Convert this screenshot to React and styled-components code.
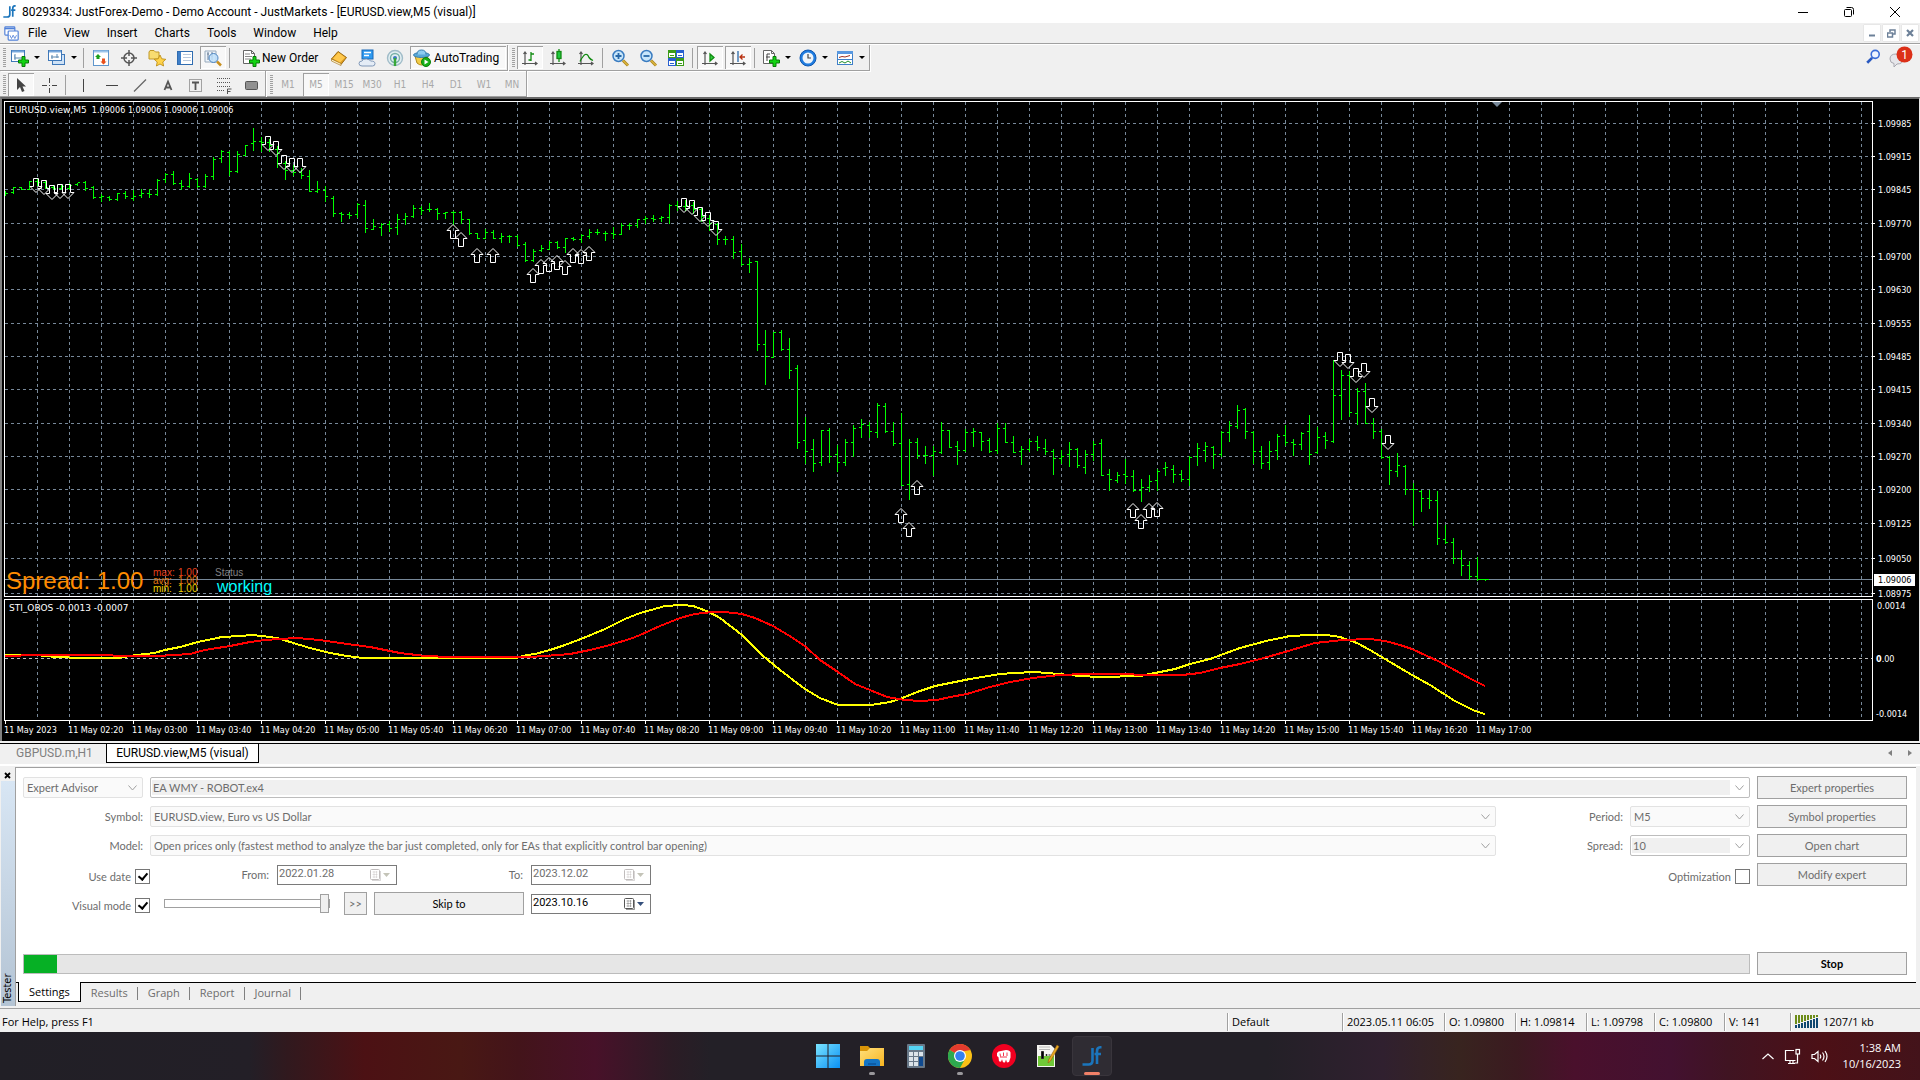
import React from "react";
import styled, { createGlobalStyle, css } from "styled-components";

const ui = `"Open Sans", Roboto, "Liberation Sans", sans-serif`;
const chrome = `Roboto, "Liberation Sans", Arial, sans-serif`;
const dialog = `Lato, "Liberation Sans", Arial, sans-serif`;
const arial = `"Liberation Sans", Arial, sans-serif`;
const small = `"DejaVu Sans Condensed", "DejaVu Sans", sans-serif`;

const Global = createGlobalStyle`
  * { box-sizing: border-box; }
  body { margin: 0; background: #f0f0f0; color: #000; font: 11px/16px ${ui}; }
  button, input, select { font: inherit; color: inherit; margin: 0; }
  ul, nav { margin: 0; padding: 0; list-style: none; }
`;

const Page = styled.div`
  min-height: 100vh;
  display: flex;
  flex-direction: column;
  overflow: hidden;
`;

/* ---------- title and menu ---------- */
const TitleBar = styled.header`
  height: 23px;
  display: flex;
  align-items: center;
  background: #fff;
  padding-left: 3px;
`;
const Title = styled.h1`
  margin: 0 0 0 6px;
  flex: 1;
  font: 12px/16px ${chrome};
`;
const Controls = styled.div`
  display: flex;
  gap: ${(p) => p.$gap || 0}px;
  padding-right: ${(p) => p.$pad || 0}px;
`;
const WinButton = styled.button`
  width: 46px;
  height: 22px;
  padding: 0;
  border: 0;
  background: none;
  display: grid;
  place-items: center;
`;
const ChildButton = styled(WinButton)`
  width: 16px;
  height: 16px;
  background: #fff;
  box-shadow: 0 0 1px #bbb;
`;
const MenuBar = styled.nav`
  height: 22px;
  display: flex;
  align-items: center;
  padding: 0 0 1px 4px;
  border-bottom: 1px solid #fff;
  box-shadow: inset 0 -1px #a0a0a0;
  font: 12px/16px ${chrome};
`;
const MenuList = styled.ul`
  flex: 1;
  display: flex;
  gap: 17px;
  padding-left: 9px;
`;
const MenuItem = styled.button`
  padding: 0;
  border: 0;
  background: none;
`;

/* ---------- toolbars ---------- */
const ToolRow = styled.div`
  display: flex;
  height: 26px;
`;
const Group = styled.div`
  display: flex;
  align-items: center;
  height: 26px;
  padding-top: ${(p) => (p.$low ? 2 : 0)}px;
  border-right: 1px solid #a0a0a0;
  border-bottom: 1px solid #a0a0a0;
  box-shadow: 1px 1px #fff;
  margin-right: 1px;
`;
const Spring = styled.div`
  flex: 1;
`;
const Grip = styled.span`
  width: 3px;
  height: 20px;
  margin: 0 1px 0 3px;
  background: repeating-linear-gradient(#a0a0a0 0 1px, #f0f0f0 1px 2px);
`;
const Sep = styled.span`
  width: 1px;
  height: 20px;
  margin: 0 3px 0 2px;
  background: #a0a0a0;
`;
const pressed = css`
  background: #f8f8f8;
  box-shadow: inset 1px 1px #a0a0a0, inset -1px -1px #fff;
`;
const Tool = styled.button`
  width: ${(p) => p.$w || 26}px;
  height: 23px;
  margin: 0 1px;
  padding: 0 0 0 ${(p) => (p.$w ? p.$pl || 3 : 0)}px;
  border: 0;
  background: none;
  display: flex;
  align-items: center;
  justify-content: ${(p) => (p.$w ? "flex-start" : "center")};
  gap: ${(p) => p.$gap || 3}px;
  white-space: nowrap;
  font: 12px/16px ${chrome};
  ${(p) => p.$on && pressed}
`;
const Period = styled(Tool)`
  color: #a8a8a8;
  font: 10px/16px ${small};
`;
const Caret = styled.span`
  border: 3px solid transparent;
  border-top-color: #000;
  border-bottom: 0;
`;

/* ---------- chart window ---------- */
const ChartWindow = styled.main`
  background: #000;
  border-top: 2px solid #696969;
  border-left: 2px solid #808080;
  border-right: 1px solid #e3e3e3;
  padding: 2px 0 0 2px;
  color: #fff;
  font: 9px/12px ${small};
`;
const PlotRow = styled.section`
  display: grid;
  grid-template-columns: minmax(0, 1fr) 46px;
  margin-bottom: ${(p) => p.$gap || 0}px;
`;
const Plot = styled.div`
  position: relative;
  border: 1px solid #fff;
  height: ${(p) => p.$h}px;
  overflow: hidden;
`;
const Drawing = styled.svg`
  display: block;
  width: 100%;
  height: 100%;
`;
const Scale = styled.svg`
  display: block;
  width: 46px;
  height: ${(p) => p.$h}px;
  overflow: visible;
  fill: #fff;
`;
const PlotTitle = styled.div`
  position: absolute;
  left: 4px;
  top: 2px;
  white-space: pre;
  span { font-family: "DejaVu Sans", sans-serif; }
`;
const Readout = styled.div`
  position: absolute;
  left: 1px;
  bottom: 0;
  display: flex;
  align-items: center;
  font-family: ${arial};
`;
const Spread = styled.div`
  color: #ff8c00;
  font-size: 24px;
  line-height: 30px;
  width: 147px;
`;
const Extremes = styled.dl`
  margin: 0;
  width: 62px;
  display: grid;
  grid-template-columns: 25px 20px;
  font-size: 10px;
  line-height: 8px;
`;
const Extreme = styled.div`
  display: contents;
  color: ${(p) => p.$c};
  dd { margin: 0; }
`;
const Status = styled.div`
  color: #808080;
  font-size: 10px;
  line-height: 10px;
  padding-top: 2px;
  strong {
    display: block;
    padding-left: 2px;
    font-weight: 400;
    font-size: 16px;
    line-height: 18px;
    color: #00ffff;
  }
`;
const TimeAxis = styled.ul`
  display: flex;
  height: 20px;
  overflow: hidden;
`;
const TimeLabel = styled.li`
  flex: 0 0 64px;
  white-space: nowrap;
  &::before {
    content: "";
    display: block;
    width: 1px;
    height: 3px;
    margin-left: 1px;
    background: #fff;
  }
`;

/* quotes: [high, low, open, close], three units to a pixel */
const lower = (by, list) => list.map((q) => q.map((v) => v + by));
const quotes = [
  ...lower(0, [
    [303,315,315,310],[291,311,308,293],[292,299,292,298],[273,299,298,275],[268,285,275,278],[275,295,278,293],
    [287,297,292,295],[283,297,295,290],[280,298,296,285],[280,285,284,277],[275,300,277,294],[290,326,293,322],
    [314,333,322,320],[318,331,321,328],[309,332,328,311],[304,326,311,319],[300,330,324,319],[299,322,317,310],
    [299,323,309,313],[267,316,314,272],[250,276,269,254],[243,284,254,280],[272,298,279,290],[249,293,290,266],
    [265,292,267,290],[252,293,290,259],[201,267,260,207],[180,216,206,184],[184,256,187,244],[184,248,245,193],
    [165,197,195,167],[114,180,160,154],[141,184,154,156],[147,185,157,165],[170,231,178,190],[215,267,221,240],
    [225,255,240,248],[235,264,246,257],[240,305,260,304],[273,307,303,298],[289,333,301,320],[320,380,325,370],
    [367,394,370,374],[366,386,373,377],[340,383,374,343],[331,426,346,415],[388,419,418,409],[401,435,412,403],
    [394,423,404,416],[372,434,412,387],[371,403,388,379],[345,381,380,355],[350,372,354,361],[339,363,358,358],
    [354,389,358,371],[366,386,370,368],[364,404,367,367],[363,399,367,388],[388,432,388,430],[430,445,430,445],
    [417,446,445,427],[420,446,427,445],[429,456,445,438],[435,456,440,439],[436,468,439,466],[456,513,463,511],
    [477,513,511,484],[465,483,481,475],[454,479,478,457],[454,474,457,472],[444,486,472,445],[442,452,446,448],
    [434,456,448,437],[417,444,440,428],[417,432,428,428],[424,450,430,430],[412,444,431,433],[399,434,433,406],
    [400,419,406,405],[387,412,406,388],
  ]),
  ...lower(270, [
    [109,129,118,116],[105,125,116,117],[108,125,114,112],[72,129,112,75],[63,90,76,80],[62,92,80,77],
    [66,100,77,88],[82,125,88,108],[105,150,115,130],[131,192,133,178],[170,194,178,178],[168,234,178,216],
    [192,256,214,253],[235,276,253,247],[243,510,244,493],[450,612,493,529],[456,533,532,457],[450,510,457,508],
    [474,594,508,571],[555,806,566,787],[711,851,781,813],[777,873,807,850],[751,857,848,751],[744,846,751,828],
    [795,875,823,847],[777,855,847,787],[736,829,787,745],[717,771,742,733],[727,773,736,754],[669,771,757,676],
    [670,758,679,754],[727,795,754,790],[699,917,790,916],[777,957,913,787],[774,836,787,826],[798,849,826,826],
    [798,886,825,814],[727,819,817,751],[751,803,751,802],[783,852,799,811],[747,813,811,757],[744,798,757,754],
    [757,810,757,784],[774,818,781,814],[729,819,811,745],[729,788,745,787],[768,818,787,817],[799,852,814,808],
    [777,815,808,784],[768,810,784,802],[778,822,805,814],[807,882,814,835],[810,851,835,829],[786,858,823,808],
    [805,861,808,856],[810,879,862,823],[783,840,823,793],[777,887,790,886],[868,930,883,898],[877,907,901,886],
    [837,909,883,889],[870,933,889,931],[897,963,931,922],[885,933,922,904],[867,930,901,874],[846,885,865,862],
    [855,906,868,883],[870,903,883,898],[828,915,898,832],[789,855,829,805],[786,843,811,799],[798,864,802,823],
    [753,829,823,757],[724,783,757,736],[675,744,739,691],[684,774,688,754],
  ]),
  ...lower(720, [
    [303,401,307,364],[348,414,364,400],[333,417,397,364],[312,387,361,318],[285,347,316,337],[327,375,337,343],
    [306,357,343,309],[255,402,304,373],[291,369,367,322],[306,354,319,331],[90,336,334,196],[120,267,196,136],
    [123,258,136,247],[174,282,250,184],[159,281,184,280],[264,324,280,304],[297,384,304,382],[379,462,382,421],
    [369,438,424,406],[405,492,409,478],[459,585,478,478],[480,543,484,505],[480,534,505,511],[483,642,511,625],
    [585,639,628,637],[624,699,637,685],[660,735,685,706],[693,748,706,739],[682,750,739,748],[747,750,748,748],
  ]),
];
const barPath = quotes
  .map(([h, l, o, c], i) => {
    const y = (v) => Math.floor(v / 3) - 12;
    const x = i * 8;
    return `M${x} ${y(h)}h1V${y(l) + 1}h-1zM${x - 2} ${y(o)}h2v1h-2zM${x + 1} ${y(c)}h2v1h-2z`;
  })
  .join("");

const sells = [[36,178],[44,180],[52,185],[60,184],[68,184],[268,136],[276,141],[284,155],[292,158],[300,158],[684,198],[692,200],[700,207],[708,212],[716,221],[1340,352],[1348,354],[1356,368],[1364,363],[1372,398],[1388,435]];
const buys = [[453,224],[461,232],[477,248],[493,248],[533,268],[541,259],[549,257],[557,255],[565,260],[573,248],[581,249],[589,246],[917,480],[901,508],[909,522],[1133,503],[1141,514],[1149,503],[1157,502]];

const levels = [
  [123, "1.09985"],[156, "1.09915"],[189, "1.09845"],[223, "1.09770"],[256, "1.09700"],[289, "1.09630"],[323, "1.09555"],
  [356, "1.09485"],[389, "1.09415"],[423, "1.09340"],[456, "1.09270"],[489, "1.09200"],[523, "1.09125"],[558, "1.09050"],[593, "1.08975"],
];

const fast = [[5,655],[37,655],[45,656],[57,657],[80,658],[118,658],[130,656],[137,655],[154,653],[165,650],[180,647],[198,642],[222,637],[240,636],[252,635],[262,636],[277,638],[290,642],[310,648],[330,653],[347,656],[363,658],[429,658],[516,658],[527,655],[535,654],[550,650],[565,645],[581,639],[605,629],[625,619],[640,613],[651,610],[665,606],[682,605],[693,606],[709,612],[720,618],[742,635],[762,655],[780,670],[805,689],[820,698],[838,705],[871,705],[890,702],[900,699],[917,692],[935,686],[950,683],[970,679],[1000,674],[1015,673],[1033,672],[1048,673],[1080,676],[1100,677],[1140,676],[1155,673],[1175,669],[1190,664],[1210,659],[1240,648],[1266,641],[1290,636],[1310,635],[1327,635],[1340,637],[1357,643],[1370,650],[1385,659],[1412,675],[1430,685],[1455,701],[1475,711],[1485,714]];
const slow = [[5,656],[37,655],[90,655],[135,656],[158,656],[190,654],[205,650],[230,646],[250,642],[265,640],[280,639],[297,638],[320,640],[340,643],[370,647],[400,653],[425,656],[450,657],[530,657],[545,656],[570,654],[590,650],[610,645],[630,639],[640,635],[660,626],[680,618],[695,614],[712,612],[725,612],[742,614],[755,618],[773,626],[793,638],[806,647],[820,660],[838,672],[855,684],[870,690],[887,697],[905,700],[920,701],[937,700],[950,697],[967,694],[990,687],[1010,682],[1033,678],[1060,675],[1085,674],[1118,674],[1150,675],[1182,675],[1200,673],[1220,668],[1240,664],[1260,659],[1285,652],[1315,643],[1343,640],[1370,639],[1385,641],[1400,645],[1412,649],[1440,662],[1460,673],[1473,680],[1485,686]];
const line = (pts) => pts.map(([x, y]) => `${x - 5},${y - 600}`).join(" ");

const times = Array.from({ length: 24 }, (_, i) => {
  if (i === 0) return "11 May 2023";
  const m = 100 + i * 40;
  return `11 May ${String(Math.floor(m / 60)).padStart(2, "0")}:${String(m % 60).padStart(2, "0")}`;
});

const gridX = Array.from({ length: 120 }, (_, i) => 32 + i * 32);
const VerticalGrid = ({ h }) => (
  <path d={gridX.map((x) => `M${x + 0.5} 0V${h}`).join("")} stroke="#778899" strokeDasharray="3 3" shapeRendering="crispEdges" />
);

const PriceChart = () => (
  <PlotRow $gap={2}>
    <Plot $h={496}>
      <Drawing aria-label="EURUSD price bars">
        <VerticalGrid h={494} />
        <path d={levels.map(([y]) => `M0 ${y - 101.5}H4000`).join("")} stroke="#778899" strokeDasharray="3 3" shapeRendering="crispEdges" />
        <path d="M0 477.5H4000" stroke="#778899" shapeRendering="crispEdges" />
        <path d={barPath} fill="#00ff00" shapeRendering="crispEdges" />
        <path d="M1473 477h11v1h-11z" fill="#00ff00" shapeRendering="crispEdges" />
        <path d="M1487 0h10l-5 5z" fill="#778899" />
        <g fill="none" stroke="#fff">
          {sells.map(([x, y]) => (
            <path key={x} d={`M${x - 7.5} ${y - 101.5}h5v8h3.500l-6 6l-6 -6h3.500z`} />
          ))}
          {buys.map(([x, y]) => (
            <path key={x} d={`M${x - 7.5} ${y - 87.5}h5v-8h3.500l-6 -6l-6 6h3.500z`} />
          ))}
        </g>
      </Drawing>
      <PlotTitle><span>EURUSD.view,M5</span>{"  1.09006 1.09006 1.09006 1.09006"}</PlotTitle>
      <Readout>
        <Spread>Spread: 1.00</Spread>
        <Extremes>
          <Extreme $c="#e8401c"><dt>max:</dt><dd>1.00</dd></Extreme>
          <Extreme $c="#e07810"><dt>avg:</dt><dd>1.00</dd></Extreme>
          <Extreme $c="#f0d000"><dt>min:</dt><dd>1.00</dd></Extreme>
        </Extremes>
        <Status>Status<strong>working</strong></Status>
      </Readout>
    </Plot>
    <Scale $h={496} aria-label="Price scale">
      {levels.map(([y, label]) => (
        <React.Fragment key={label}>
          <rect x="0" y={y - 101} width="2" height="1" />
          <text x="5" y={y - 97}>{label}</text>
        </React.Fragment>
      ))}
      <rect x="1" y="473" width="41" height="12" />
      <text x="5" y="482" fill="#000">1.09006</text>
    </Scale>
  </PlotRow>
);

const Indicator = () => (
  <PlotRow>
    <Plot $h={122}>
      <Drawing aria-label="STI_OBOS indicator">
        <VerticalGrid h={120} />
        <path d="M0 58.500H4000" stroke="#c0c0c0" strokeDasharray="3 3" shapeRendering="crispEdges" />
        <g fill="none" strokeWidth="2" shapeRendering="crispEdges">
          <polyline points={line(fast)} stroke="#ffff00" />
          <polyline points={line(slow)} stroke="#ff0000" />
        </g>
      </Drawing>
      <PlotTitle><span>STI_OBOS -0.0013 -0.0007</span></PlotTitle>
    </Plot>
    <Scale $h={122} aria-label="Indicator scale">
      <text x="4" y="10">0.0014</text>
      <text x="3" y="63"><tspan fontWeight="700">0</tspan>.00</text>
      <text x="3" y="118">-0.0014</text>
    </Scale>
  </PlotRow>
);

/* ---------- chart tabs ---------- */
const ChartTabs = styled.nav`
  display: flex;
  align-items: flex-start;
  height: 23px;
  margin-top: 2px;
  border-top: 1px solid #000;
  border-bottom: 2px solid #fff;
  padding-left: 3px;
`;
const ChartTab = styled.button`
  height: 19px;
  width: ${(p) => p.$w}px;
  padding: 0;
  font: 12px/16px ${chrome};
  border: 1px solid transparent;
  border-top: 0;
  background: ${(p) => (p.$on ? "#fff" : "none")};
  border-color: ${(p) => (p.$on ? "#000" : "transparent")};
  color: ${(p) => (p.$on ? "#000" : "#808080")};
`;
const Scroll = styled.button`
  width: 20px;
  height: 16px;
  padding: 0;
  border: 0;
  background: none;
`;

/* ---------- tester ---------- */
const Tester = styled.section`
  display: grid;
  grid-template-columns: 15px minmax(0, 1fr);
  margin: 0 4px 0 0;
  padding-top: 1px;
`;
const Side = styled.div`
  display: flex;
  flex-direction: column;
  align-items: center;
`;
const SideClose = styled.button`
  width: 12px;
  height: 14px;
  padding: 0;
  border: 0;
  background: none;
`;
const SideTitle = styled.h2`
  flex: 1;
  width: 14px;
  margin: 0;
  padding: 3px 0 0;
  background: linear-gradient(#b4c4d4, #d8e6f4);
  writing-mode: vertical-rl;
  rotate: 180deg;
  font: 11px/14px ${small};
`;
const TesterBody = styled.div`
  border-left: 1px solid #a0a0a0;
  border-top: 1px solid #a0a0a0;
  background: #fff;
`;
const Form = styled.form`
  display: grid;
  grid-template-columns: 120px minmax(0, 1fr) 120px 120px 150px;
  grid-auto-rows: 23px;
  gap: 6px 7px;
  padding: 8px 9px 0 7px;
  color: #6d6d6d;
  font: 11px/14px ${dialog};
  align-items: center;
`;
const Label = styled.label`
  text-align: right;
  color: #6d6d6d;
`;
const Cell = styled.div`
  grid-column: ${(p) => p.$col};
  min-width: 0;
  display: flex;
  align-items: center;
  justify-content: ${(p) => (p.$end ? "flex-end" : "flex-start")};
`;
const SelectBox = styled.div`
  grid-column: ${(p) => p.$col};
  position: relative;
  height: 21px;
  border: 1px solid ${(p) => (p.$edit ? "#bdbdbd" : "#e2e2e2")};
  border-radius: 2px;
  background: ${(p) => (p.$edit ? "#fff" : "#fafafa")};
  padding: ${(p) => (p.$edit ? "2px 19px 2px 1px" : "0")};
  svg { position: absolute; right: 5px; top: 7px; }
`;
const Select = styled.select`
  appearance: none;
  display: block;
  width: 100%;
  height: 100%;
  border: 0;
  padding: 0 ${(p) => (p.$edit ? 1 : 3)}px;
  opacity: 1;
  color: #6d6d6d;
  background: ${(p) => (p.$edit ? "#f0f0f0" : "transparent")};
`;
const PushButton = styled.button`
  height: 23px;
  width: ${(p) => (p.$w ? `${p.$w}px` : "100%")};
  padding: 0;
  margin-right: ${(p) => p.$mr || 0}px;
  border: 1px solid #a0a0a0;
  background: #f0f0f0;
  color: ${(p) => (p.$ready ? "#000" : "#6d6d6d")};
  font-weight: ${(p) => (p.$bold ? 700 : 400)};
`;
const Check = styled.input`
  appearance: none;
  flex: none;
  width: 15px;
  height: 15px;
  margin: 0 0 0 4px;
  border: 1px solid #767676;
  background: #fff;
  display: grid;
  place-items: center;
  color: #000;
  &:checked::after {
    content: "";
    width: 4px;
    height: 7px;
    margin-top: -2px;
    border: solid #000;
    border-width: 0 2px 2px 0;
    rotate: 40deg;
  }
`;
const CheckLabel = styled(Cell)`
  padding-top: 4px;
  margin-right: ${(p) => (p.$hang ? -7 : 0)}px;
`;
const DateBox = styled.div`
  width: 120px;
  height: 20px;
  display: flex;
  align-items: center;
  border: 1px solid #7a7a7a;
  background: #fff;
  color: ${(p) => (p.$live ? "#000" : "#6d6d6d")};
  padding-right: 5px;
`;
const DateInput = styled.input`
  flex: 1;
  min-width: 0;
  height: 18px;
  padding: 0 0 2px 1px;
  border: 0;
  background: none;
  font-family: ${chrome};
`;
const FieldLabel = styled(Label)`
  width: ${(p) => p.$w}px;
  padding-right: 8px;
`;
const Range = styled.input`
  appearance: none;
  width: 166px;
  height: 20px;
  margin: 0 14px;
  background: none;
  &::-webkit-slider-runnable-track {
    height: 9px;
    border: 1px solid #a0a0a0;
    background: #fff;
  }
  &::-webkit-slider-thumb {
    appearance: none;
    width: 9px;
    height: 19px;
    margin-top: -6px;
    border: 1px solid #a0a0a0;
    background: #f0f0f0;
  }
`;
const RunRow = styled.div`
  display: grid;
  grid-template-columns: minmax(0, 1fr) 150px;
  gap: 7px;
  align-items: center;
  padding: 37px 9px 7px 7px;
  font: 11px/14px ${dialog};
`;
const Progress = styled.progress`
  appearance: none;
  display: block;
  width: 100%;
  height: 20px;
  border: 1px solid #bcbcbc;
  &::-webkit-progress-bar { background: #e6e6e6; }
  &::-webkit-progress-value { background: #06b025; }
`;
const TesterTabs = styled.nav`
  display: flex;
  height: 24px;
  border-top: 1px solid #000;
  background: #f0f0f0;
  padding-left: 2px;
`;
const TesterTab = styled.button`
  height: 19px;
  padding: 0 10px;
  border: 0;
  color: #6d6d6d;
  background: linear-gradient(#808080, #808080) right 4px / 1px 13px no-repeat;
  ${(p) => p.$on && css`
    color: #000;
    background: #fff;
    border: solid #000;
    border-width: 0 1px 1px;
    margin-top: -1px;
    height: 20px;
  `}
`;

/* ---------- status bar ---------- */
const StatusBar = styled.footer`
  height: 24px;
  display: flex;
  align-items: center;
  border-top: 1px solid #a0a0a0;
  padding: 2px 0 0 2px;
`;
const Help = styled.span`
  flex: 1;
`;
const StatusCell = styled.span`
  width: ${(p) => p.$w}px;
  height: 18px;
  line-height: 18px;
  display: flex;
  align-items: center;
  gap: 4px;
  border-left: 1px solid #a0a0a0;
  box-shadow: inset 1px 0 #fff;
  padding-left: 4px;
  white-space: nowrap;
`;

/* ---------- taskbar ---------- */
const Taskbar = styled.nav`
  height: 48px;
  display: grid;
  grid-template-columns: 1fr auto 1fr;
  align-items: center;
  color: #fff;
  background: linear-gradient(90deg, #211f26 0%, #231f27 13%, #31191e 15%, #4c1114 19%, #491814 24%, #43141a 27%, #481129 31%, #2b1c25 35%, #232027 37%, #232027 66%, #30202f 72%, #38241f 76%, #3b1a20 79%, #4a102c 82%, #431130 87%, #401422 90%, #4c1016 95%, #43131a 100%);
`;
const Apps = styled.div`
  grid-column: 2;
  display: flex;
  gap: 4px;
`;
const AppButton = styled.button`
  position: relative;
  width: 40px;
  height: 40px;
  padding: 0;
  border: 1px solid ${(p) => (p.$active ? "#39353c" : "transparent")};
  border-radius: 4px;
  background: ${(p) => (p.$active ? "#2f2c33" : "none")};
  display: grid;
  place-items: center;
  ${(p) => p.$mark && css`
    &::after {
      content: "";
      position: absolute;
      left: calc(50% - ${p.$mark / 2}px);
      bottom: 0;
      width: ${p.$mark}px;
      height: 3px;
      border-radius: 2px;
      background: ${p.$active ? "#f08068" : "#9a989c"};
    }
  `}
`;
const Tray = styled.div`
  display: flex;
  align-items: center;
  justify-content: flex-end;
  gap: 10px;
  padding-right: 19px;
`;
const Clock = styled.time`
  text-align: right;
  margin-left: 5px;
`;

/* ---------- icons ---------- */
const Glyph = styled.svg`
  flex: none;
`;
const Icon = ({ s = 18, children, ...rest }) => (
  <Glyph width={s} height={s} viewBox="0 0 18 18" fill="none" aria-hidden="true" {...rest}>{children}</Glyph>
);
const Plus = ({ x = 7, y = 7 }) => (
  <path transform={`translate(${x} ${y})`} d="M4 .5h3v3.500h3.500v3H7V10.500H4V7H.5V4H4z" fill="#12d412" stroke="#087a08" />
);
const JF = ({ s = 13 }) => (
  <svg width={s} height={s} viewBox="0 0 20 20" fill="none" stroke="#1b75bc" strokeWidth="2.600" aria-hidden="true">
    <path d="M10.500 2v12.500q0 4-4 4H.5M19.500 1.300h-1.500q-3 0-3 4V18M12.500 8H19" />
  </svg>
);
const ChartPlus = () => (
  <Icon><rect x=".5" y="1.500" width="13" height="11" fill="#fff" stroke="#3f78b8" /><path d="M1 2.500h12" stroke="#78a8dc" strokeWidth="2" /><path d="M4 5v6M3 9h8M4 7h-1" stroke="#5a88b0" /><Plus /></Icon>
);
const Profiles = () => (
  <Icon><rect x="4.500" y="5.500" width="12" height="10" fill="#cfe2f6" stroke="#3f78b8" /><rect x=".5" y="1.500" width="13" height="10" fill="#fff" stroke="#3f78b8" /><path d="M1 2.500h12" stroke="#78a8dc" strokeWidth="2" /><path d="M3 8h8M4 6v4M9 5v4" stroke="#5a88b0" /></Icon>
);
const Market = () => (
  <Icon><rect x="1.500" y="1.500" width="15" height="15" fill="#fff" stroke="#5f96cc" /><path d="M2 2.500h14" stroke="#9cc4ea" strokeWidth="2" /><path d="M6 5l3 3H7.500v2h-3V8H3z" fill="#1aa01a" /><path d="M11.500 15.500l-3-3H10v-3h3v3h1.500z" fill="#e8501c" /></Icon>
);
const Cross = () => (
  <Icon stroke="#555" strokeWidth="1.500"><circle cx="9" cy="9" r="5" /><path d="M9 1v6M9 11v6M1 9h6M11 9h6" /></Icon>
);
const Star = () => (
  <Icon><path d="M1 3l1-1.500h4L7.500 3H11v7H1z" fill="#f8dc70" stroke="#c09828" /><path d="M12 6l1.800 3.800 4 .5-3 2.700.8 4-3.600-2-3.600 2 .8-4-3-2.700 4-.5z" fill="#ffd34a" stroke="#b8860b" strokeWidth=".8" /></Icon>
);
const Book = () => (
  <Icon><rect x="1.500" y="2.500" width="15" height="13" fill="#fff" stroke="#2f6cb0" /><path d="M2 3h3v12H2z" fill="#3f7fc8" /><path d="M7 5.500h8M7 8.500h8M7 11.500h8" stroke="#b8c8dc" /></Icon>
);
const TesterIcon = () => (
  <Icon><path d="M1 2h11v11H1z" fill="#eef4fa" stroke="#98aabc" /><path d="M4 3v8M8 3v8M3 5h2M7 7h2" stroke="#6c8098" /><circle cx="9.500" cy="9" r="4.500" fill="#bfe0fa" fillOpacity=".85" stroke="#4c84c0" /><path d="M13 12.500l4 4" stroke="#c89020" strokeWidth="2.500" /></Icon>
);
const Sheet = ({ f }) => (
  <Icon><path d="M1.500 1.500h8l3 3v10h-11z" fill="#fff" stroke="#666" /><path d="M9.500 1.500v3h3" stroke="#666" />{f ? <path d="M5 12V5h3M4 8h4" stroke="#444" /> : <path d="M3 5h5M3 7.500h7M3 10h6" stroke="#888" />}<Plus /></Icon>
);
const Gold = () => (
  <Icon><path d="M1.500 10L8 2.500l8.500 6-5.500 7z" fill="#e0a024" stroke="#9c6a10" /><path d="M3 9.500L8.500 3.500l6.500 5-5 5z" fill="#ffc94e" /><path d="M1.500 10v2l9.500 4.500v-2z" fill="#fff2c8" stroke="#9c6a10" strokeWidth=".6" /></Icon>
);
const Vps = () => (
  <Icon><rect x="4" y="1" width="11" height="9" fill="#2f9af0" stroke="#1868b8" /><path d="M6 3.500h7M6 6.500h5" stroke="#fff" strokeWidth="1.500" /><path d="M4 17q-3 0-3-2.500T4 12q1-2.500 4.500-2t4 2Q17 12 17 14.500T14.500 17z" fill="#e4ecf6" stroke="#8098b8" /></Icon>
);
const Signal = () => (
  <Icon><circle cx="9" cy="9" r="7.500" fill="#e2eef2" stroke="#a0bcc8" strokeWidth="1.400" /><circle cx="9" cy="9" r="4.500" stroke="#78b0a8" strokeWidth="1.400" /><circle cx="9" cy="9" r="2" fill="#3878c0" /><path d="M9 9v8" stroke="#38a838" strokeWidth="2.400" /></Icon>
);
const Auto = () => (
  <Icon><path d="M2 7h13l-2 7q-4.500 4-9 0z" fill="#f2cc48" stroke="#b08a18" /><ellipse cx="8.500" cy="6" rx="8" ry="2.500" fill="#58a8d8" stroke="#3880b0" /><path d="M4 5.500q0-4.500 4.500-4.500T13 5.500" fill="#8cccf0" stroke="#3880b0" /><circle cx="13" cy="13" r="4.500" fill="#18b018" stroke="#0c800c" /><path d="M11.500 10.500v5l4-2.500z" fill="#fff" /></Icon>
);
const Axis = ({ children, c = "#108a10" }) => (
  <Icon><path d="M4 3v13M1 14.500h14M2.500 5L4 3l1.500 2M14 13l2 1.500-2 1.500" stroke="#555" strokeWidth="1.200" /><g stroke={c} strokeWidth="1.300">{children}</g></Icon>
);
const Lens = ({ plus }) => (
  <Icon><circle cx="7.500" cy="7" r="5.500" fill="#c8e6fa" stroke="#3a7cc0" strokeWidth="1.500" /><path d={plus ? "M4.500 7h6M7.500 4v6" : "M4.500 7h6"} stroke="#2868a8" strokeWidth="1.800" /><path d="M12 11.500l5 5" stroke="#b08820" strokeWidth="3" /><path d="M12 11.500l5 5" stroke="#f8d850" /></Icon>
);
const Tiles = () => (
  <Icon>{[[1, 1, "#3c9c18"], [9, 1, "#2860d0"], [1, 9, "#2860d0"], [9, 9, "#3c9c18"]].map(([x, y, c]) => (
    <g key={`${x}${y}`}><rect x={x} y={y} width="8" height="8" fill={c} /><path d={`M${x + 1} ${y + 3}h6v4h-6z`} fill="#fff" /><path d={`M${x + 2} ${y + 5.5}h4`} stroke={c} /></g>
  ))}</Icon>
);
const ClockIcon = () => (
  <Icon><circle cx="9" cy="9" r="8" fill="#1f7ce0" stroke="#1058b0" /><circle cx="9" cy="9" r="5.500" fill="#eef4fa" /><path d="M9 5v4h3" stroke="#444" strokeWidth="1.200" /></Icon>
);
const Template = () => (
  <Icon><rect x="1.500" y="2.500" width="15" height="13" fill="#fff" stroke="#3f7fc8" /><path d="M1 3.500h16" stroke="#5898e0" strokeWidth="3" /><path d="M3 8.500l3-1 3 .5 5-1.500" stroke="#a03020" /><path d="M2 10.500h14" stroke="#3f7fc8" /><path d="M3 14l3-1.500 3 1.500 3-2 3 2" stroke="#20902c" /></Icon>
);
const Chevron = () => (
  <svg width="9" height="6" viewBox="0 0 9 6" fill="none" stroke="#a0a0a0" aria-hidden="true"><path d="M.5.5l4 4.500 4-4.500" /></svg>
);
const Calendar = ({ c, t }) => (
  <svg width="21" height="12" viewBox="0 0 21 12" fill="none" aria-hidden="true">
    <rect x=".5" y=".5" width="9" height="10" rx="1" fill="#fff" stroke={c} /><path d="M2.500 3h5M2.500 5.500h5M2.500 8h5M4 2v7M6.500 2v7" stroke={c} strokeOpacity=".4" /><path d="M10.500 2v9.500H2" stroke={c} strokeOpacity=".6" /><path d="M13 4h7l-3.500 4z" fill={t} />
  </svg>
);

const DropTool = ({ label, children }) => (
  <Tool $w={35} $gap={5} aria-label={label}>{children}<Caret /></Tool>
);

const Toolbars = () => (
  <div>
    <ToolRow>
      <Group>
        <Grip />
        <DropTool label="New chart"><ChartPlus /></DropTool>
        <DropTool label="Profiles"><Profiles /></DropTool>
        <Sep />
        <Tool aria-label="Market Watch"><Market /></Tool>
        <Tool aria-label="Data Window"><Cross /></Tool>
        <Tool aria-label="Navigator"><Star /></Tool>
        <Tool aria-label="Terminal"><Book /></Tool>
        <Tool $on aria-label="Strategy Tester"><TesterIcon /></Tool>
        <Sep />
        <Tool $w={90} $gap={2} $pl={8}><Sheet />New Order</Tool>
        <Tool aria-label="MetaEditor"><Gold /></Tool>
        <Tool aria-label="VPS"><Vps /></Tool>
        <Tool aria-label="Signals"><Signal /></Tool>
        <Tool $w={96} $on><Auto />AutoTrading</Tool>
      </Group>
      <Group>
        <Grip />
        <Tool $on aria-label="Bar chart"><Axis><path d="M10 3v9M10 5h3M7.500 11H10" /></Axis></Tool>
        <Tool aria-label="Candlesticks"><Axis><path d="M10 0v13" /><rect x="8" y="2.500" width="4" height="7" fill="#20c840" /></Axis></Tool>
        <Tool aria-label="Line chart"><Axis><path d="M3 12.500q6-12 9-4 1.500 2 4 3" /></Axis></Tool>
        <Sep />
        <Tool aria-label="Zoom in"><Lens plus /></Tool>
        <Tool aria-label="Zoom out"><Lens /></Tool>
        <Tool aria-label="Tile windows"><Tiles /></Tool>
        <Sep />
        <Tool $on aria-label="Auto scroll"><Axis><path d="M9 5v7l4-3.500z" fill="#30d040" /></Axis></Tool>
        <Tool $on aria-label="Chart shift"><Axis c="#b83010"><path d="M9 2v11" stroke="#2868a8" /><path d="M16 8h-5M13.500 5.500L11 8l2.500 2.500" /></Axis></Tool>
        <Sep />
        <DropTool label="Indicators"><Sheet f /></DropTool>
        <DropTool label="Periods"><ClockIcon /></DropTool>
        <DropTool label="Templates"><Template /></DropTool>
      </Group>
      <Spring />
      <Controls $pad={5}>
        <Tool aria-label="Search"><Icon s={16}><circle cx="11.500" cy="6" r="4.500" fill="#eef4ff" stroke="#3a6cd8" strokeWidth="1.800" /><path d="M8 10l-5.500 5.500" stroke="#2858c0" strokeWidth="3" /></Icon></Tool>
        <Tool aria-label="Notifications">
          <svg width="24" height="21" viewBox="0 0 24 21">
            <path d="M1 13q0-5 6-5t7 5q0 5-6 5l-3 3v-3.500Q1 17 1 13z" fill="#e6e6ea" stroke="#a8a8b0" />
            <circle cx="15.500" cy="8.500" r="8" fill="#dc3018" />
            <text x="15.500" y="13" textAnchor="middle" fill="#fff" fontSize="12">1</text>
          </svg>
        </Tool>
      </Controls>
    </ToolRow>
    <ToolRow>
      <Group $low>
        <Grip />
        <Tool $on aria-label="Cursor"><Icon><path d="M5 2v12l3-3 2 5 2.500-1-2-4.500H14z" fill="#444" /></Icon></Tool>
        <Tool aria-label="Crosshair"><Icon stroke="#444"><path d="M9.500 2v5M9.500 12v5M2 9.500h5M12 9.500h5M9 9.500h1" /></Icon></Tool>
        <Sep />
        <Tool aria-label="Vertical line"><Icon stroke="#444"><path d="M9.500 3v13" /></Icon></Tool>
        <Tool aria-label="Horizontal line"><Icon stroke="#444"><path d="M4 9.500h12" /></Icon></Tool>
        <Tool aria-label="Trendline"><Icon stroke="#666" strokeWidth="1.300"><path d="M4 15.500L16 3.500" /></Icon></Tool>
        <Tool aria-label="Text"><Icon stroke="#555" strokeWidth="1.800"><path d="M6.500 14L10 5.500l3.500 8.500M7.500 11.500h5" /></Icon></Tool>
        <Tool aria-label="Text label"><Icon stroke="#555"><rect x="3.500" y="3.500" width="12" height="12" strokeDasharray="1 1" /><path d="M6 6.500h7M9.500 6v8" strokeWidth="1.800" /></Icon></Tool>
        <Tool aria-label="Fibonacci"><Icon stroke="#555"><path d="M3 2.500h14M3 6.500h14M3 10.500h14M3 14.500h8" strokeDasharray="1 1" /><path d="M13.500 18v-5h4M13.500 15.500h3" /></Icon></Tool>
        <Tool aria-label="Rectangle"><Icon><rect x="3.500" y="5.500" width="12" height="8" rx="1" fill="#909090" stroke="#555" /></Icon></Tool>
      </Group>
      <Group $low>
        <Grip />
        {["M1", "M5", "M15", "M30", "H1", "H4", "D1", "W1", "MN"].map((p) => (
          <Period key={p} $on={p === "M5"}>{p}</Period>
        ))}
      </Group>
    </ToolRow>
  </div>
);

const Choice = ({ id, col, edit, children }) => (
  <SelectBox $col={col} $edit={edit}>
    <Select id={id} $edit={edit} disabled aria-label={id}><option>{children}</option></Select>
    <Chevron />
  </SelectBox>
);

const DateField = ({ id, value, live }) => (
  <DateBox $live={live}>
    <DateInput id={id} defaultValue={value} disabled={!live} aria-label={id} />
    <Calendar c={live ? "#555" : "#c0bcbc"} t={live ? "#35507c" : "#c4c4b8"} />
  </DateBox>
);

const TesterPanel = () => (
  <Tester>
    <Side>
      <SideClose aria-label="Close tester"><svg width="7" height="7" viewBox="0 0 7 7" stroke="#000" strokeWidth="1.800"><path d="M1 1l5 5M6 1L1 6" /></svg></SideClose>
      <SideTitle>Tester</SideTitle>
    </Side>
    <TesterBody>
      <Form onSubmit={(e) => e.preventDefault()}>
        <Choice id="kind" col="1">Expert Advisor</Choice>
        <Choice id="expert" col="2 / 5" edit>EA WMY - ROBOT.ex4</Choice>
        <PushButton type="button">Expert properties</PushButton>

        <Label htmlFor="symbol">Symbol:</Label>
        <Choice id="symbol" col="2">EURUSD.view, Euro vs US Dollar</Choice>
        <Label htmlFor="period">Period:</Label>
        <Choice id="period" col="4">M5</Choice>
        <PushButton type="button">Symbol properties</PushButton>

        <Label htmlFor="model">Model:</Label>
        <Choice id="model" col="2">Open prices only (fastest method to analyze the bar just completed, only for EAs that explicitly control bar opening)</Choice>
        <Label htmlFor="spread">Spread:</Label>
        <Choice id="spread" col="4" edit>10</Choice>
        <PushButton type="button">Open chart</PushButton>

        <CheckLabel $col="1" $end $hang><label htmlFor="usedate">Use date</label><Check id="usedate" type="checkbox" defaultChecked /></CheckLabel>
        <Cell $col="2 / 4">
          <FieldLabel $w={127} htmlFor="from">From:</FieldLabel><DateField id="from" value="2022.01.28" />
          <FieldLabel $w={134} htmlFor="to">To:</FieldLabel><DateField id="to" value="2023.12.02" />
        </Cell>
        <CheckLabel $col="4" $end><label htmlFor="optimization">Optimization</label><Check id="optimization" type="checkbox" /></CheckLabel>
        <PushButton type="button">Modify expert</PushButton>

        <CheckLabel $col="1" $end $hang><label htmlFor="visual">Visual mode</label><Check id="visual" type="checkbox" defaultChecked /></CheckLabel>
        <Cell $col="2 / 5">
          <Range type="range" defaultValue="100" aria-label="Speed" />
          <PushButton type="button" $w={23} $mr={7}>&gt;&gt;</PushButton>
          <PushButton type="button" $w={150} $mr={7} $ready>Skip to</PushButton>
          <DateField id="skip" value="2023.10.16" live />
        </Cell>
      </Form>
      <RunRow>
        <Progress value="33" max="1726" aria-label="Test progress" />
        <PushButton $ready $bold>Stop</PushButton>
      </RunRow>
      <TesterTabs>
        {["Settings", "Results", "Graph", "Report", "Journal"].map((t, i) => (
          <TesterTab key={t} $on={i === 0}>{t}</TesterTab>
        ))}
      </TesterTabs>
    </TesterBody>
  </Tester>
);

const TaskIcons = {
  start: <svg width="24" height="24" viewBox="0 0 24 24"><defs><linearGradient id="win" x2="1" y2="1"><stop stopColor="#7ae4ff" /><stop offset="1" stopColor="#0a90f4" /></linearGradient></defs><path fill="url(#win)" d="M0 0h11.500v11.500H0zM12.500 0H24v11.500H12.500zM0 12.500h11.500V24H0zM12.500 12.500H24V24H12.500z" /></svg>,
  files: <svg width="24" height="24" viewBox="0 0 24 24"><defs><linearGradient id="fold" x2="1" y2="1"><stop stopColor="#ffe07c" /><stop offset="1" stopColor="#f8b420" /></linearGradient></defs><path d="M0 2h8l3 3v3H0z" fill="#d89408" /><path d="M0 7h7l3-3h14v18H0z" fill="url(#fold)" /><path d="M4 22v-4q0-3 3-3h10q3 0 3 3v4z" fill="#1474c4" /><path d="M8 20h8" stroke="#0b559c" strokeWidth="1.500" /></svg>,
  calc: <svg width="18" height="24" viewBox="0 0 18 24"><rect width="18" height="24" rx="1" fill="#687888" /><rect x="2" y="2" width="14" height="4" fill="#54d4f4" /><g fill="#dce4ea">{[8, 13, 18].map((y) => [2, 7, 12].map((x) => <rect key={x + "-" + y} x={x} y={y} width="4" height="4" />))}</g><path d="M12 13h4v9h-4z" fill="#104a90" /></svg>,
  chrome: <svg width="24" height="24" viewBox="0 0 24 24"><circle cx="12" cy="12" r="12" fill="#fbc116" /><path d="M12 12L1.600 6A12 12 0 0 1 22.400 6H12z" fill="#e33b2e" /><path d="M1.600 6A12 12 0 0 0 12 24l5-9-5 1z" fill="#2da94f" /><path d="M1.600 6l5.500 9L12 12z" fill="#2da94f" /><path d="M12 6h10.400L12 8z" fill="#e33b2e" /><circle cx="12" cy="12" r="6" fill="#fff" /><circle cx="12" cy="12" r="4.800" fill="#3480f0" /></svg>,
  fist: <svg width="24" height="24" viewBox="0 0 24 24"><circle cx="12" cy="12" r="12" fill="#f00020" /><path d="M5 9q1-2 4-2l5-1q4 0 4.500 2.500v5L17 18l-2 .5-1-3-1 3-2-.2-1-3-1 2.500-2-.5-.5-4L5 12z" fill="#fff" /><path d="M8 9.500l.5 3M11.500 8.500v3.500M15 8.500v3.500M8 13h7" stroke="#f00020" strokeWidth=".8" /></svg>,
  notepad: <svg width="24" height="24" viewBox="0 0 24 24"><path d="M1 1h14l4 4v18H1z" fill="#f6f6f2" /><path d="M2 12h16v10H2z" fill="#70c838" /><path d="M3 3h11M3 5.500h11" stroke="#b8b8b8" /><path d="M5.500 7.500v7h2v-7zM9.500 11h2M12.500 11h2M10.500 10v2" stroke="#282828" /><path d="M21 1l2 1.500L14.500 17l-2.500 2 .5-3z" fill="#e8a820" stroke="#905c10" strokeWidth=".6" /></svg>,
  jf: <JF s={20} />,
};

export default function App() {
  return (
    <Page>
      <Global />
      <TitleBar>
        <JF />
        <Title>8029334: JustForex-Demo - Demo Account - JustMarkets - [EURUSD.view,M5 (visual)]</Title>
        <Controls $pad={2}>
          <WinButton aria-label="Minimize"><svg width="10" height="10"><path d="M0 5.500h10" stroke="#000" /></svg></WinButton>
          <WinButton aria-label="Restore"><svg width="10" height="10" fill="none" stroke="#000"><rect x=".5" y="2.500" width="7" height="7" rx="1" /><path d="M2.500.5h5q2 0 2 2v5" /></svg></WinButton>
          <WinButton aria-label="Close"><svg width="10" height="10" stroke="#000"><path d="M0 0l10 10M10 0L0 10" /></svg></WinButton>
        </Controls>
      </TitleBar>
      <MenuBar>
        <Icon s={15}><rect x="1" y="1" width="12" height="10" rx="1" fill="#fff" stroke="#5080d8" strokeWidth="1.400" /><path d="M1 3h12" stroke="#5080d8" strokeWidth="2" /><rect x="5" y="6" width="12" height="11" rx="1" fill="#fff" stroke="#5080d8" strokeWidth="1.400" /><path d="M7 11l2 4 2-4 2 4 2-4" stroke="#5080d8" /></Icon>
        <MenuList>
          {["File", "View", "Insert", "Charts", "Tools", "Window", "Help"].map((m) => (
            <li key={m}><MenuItem>{m}</MenuItem></li>
          ))}
        </MenuList>
        <Controls $gap={3} $pad={2}>
          <ChildButton aria-label="Minimize chart"><svg width="8" height="8"><path d="M1 6.500h6" stroke="#6c8098" strokeWidth="2" /></svg></ChildButton>
          <ChildButton aria-label="Restore chart"><svg width="9" height="9" fill="none" stroke="#6c8098"><rect x=".5" y="4" width="5" height="4" strokeWidth="1.500" /><path d="M3 3V1h5v4H6" strokeWidth="1.500" /></svg></ChildButton>
          <ChildButton aria-label="Close chart"><svg width="8" height="8"><path d="M1 1l6 6M7 1L1 7" stroke="#6c8098" strokeWidth="2.200" /></svg></ChildButton>
        </Controls>
      </MenuBar>
      <Toolbars />
      <ChartWindow>
        <PriceChart />
        <Indicator />
        <TimeAxis>{times.map((t) => <TimeLabel key={t}>{t}</TimeLabel>)}</TimeAxis>
      </ChartWindow>
      <ChartTabs>
        <ChartTab $w={103}>GBPUSD.m,H1</ChartTab>
        <ChartTab $w={153} $on>EURUSD.view,M5 (visual)</ChartTab>
        <Spring />
        <Scroll aria-label="Previous tab"><svg width="4" height="6"><path d="M4 0v6L0 3z" fill="#808080" /></svg></Scroll>
        <Scroll aria-label="Next tab"><svg width="4" height="6"><path d="M0 0v6l4-3z" fill="#808080" /></svg></Scroll>
      </ChartTabs>
      <TesterPanel />
      <Spring />
      <StatusBar>
        <Help>For Help, press F1</Help>
        <StatusCell $w={115}>Default</StatusCell>
        <StatusCell $w={102}>2023.05.11 06:05</StatusCell>
        <StatusCell $w={71}>O: 1.09800</StatusCell>
        <StatusCell $w={71}>H: 1.09814</StatusCell>
        <StatusCell $w={68}>L: 1.09798</StatusCell>
        <StatusCell $w={70}>C: 1.09800</StatusCell>
        <StatusCell $w={66}>V: 141</StatusCell>
        <StatusCell $w={130}>
          <svg width="24" height="13" aria-hidden="true">
            {[0, 1, 2, 3, 4, 5, 6, 7].map((i) => (
              <g key={i}><rect x={i * 3} y="0" width="2" height={9 - i} fill="#6c8c18" /><rect x={i * 3} y={10 - i} width="2" height={3 + i} fill="#104870" /></g>
            ))}
          </svg>
          1207/1 kb
        </StatusCell>
      </StatusBar>
      <Taskbar>
        <Apps>
          <AppButton aria-label="Start">{TaskIcons.start}</AppButton>
          <AppButton aria-label="File Explorer" $mark={6}>{TaskIcons.files}</AppButton>
          <AppButton aria-label="Calculator">{TaskIcons.calc}</AppButton>
          <AppButton aria-label="Chrome" $mark={6}>{TaskIcons.chrome}</AppButton>
          <AppButton aria-label="Fist">{TaskIcons.fist}</AppButton>
          <AppButton aria-label="Notepad++">{TaskIcons.notepad}</AppButton>
          <AppButton aria-label="JustMarkets" $active $mark={16}>{TaskIcons.jf}</AppButton>
        </Apps>
        <Tray>
          <svg width="12" height="7" fill="none" stroke="#fff" strokeWidth="1.200"><path d="M.5 6L6 1l5.500 5" /></svg>
          <svg width="17" height="17" fill="none" stroke="#fff" strokeWidth="1.200"><path d="M10 2.500H1.500v10h10M4 15.500h7M6 12.500v3M9 12.500v3M13.500 6v9h-3" /><rect x="12" y="1.500" width="3.500" height="4.500" /></svg>
          <svg width="17" height="15" fill="none" stroke="#fff" strokeWidth="1.200"><path d="M1 5.500h2.500L7 2.500v10L3.500 9.500H1zM9 5.500q1.500 2 0 4M11.500 3.500q3 4 0 8M14 2q4 5.500 0 11" /></svg>
          <Clock>1:38 AM<br />10/16/2023</Clock>
        </Tray>
      </Taskbar>
    </Page>
  );
}
